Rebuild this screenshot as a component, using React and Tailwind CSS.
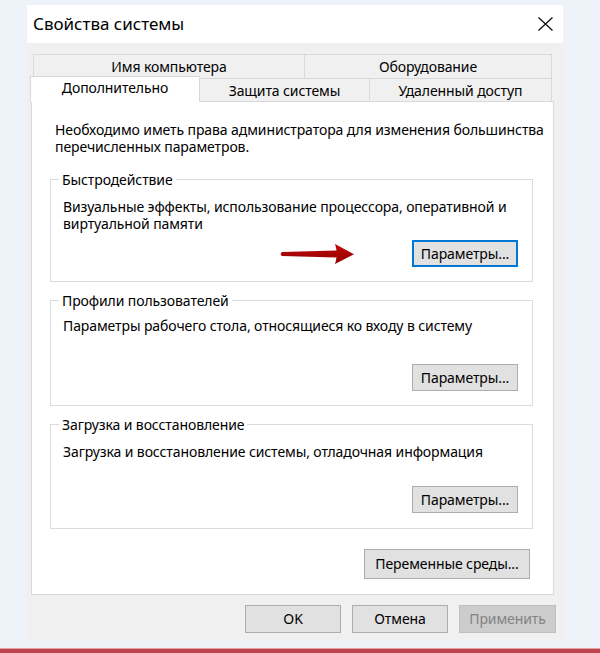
import React from "react"

function Btn({ children, focused, disabled, className = "" }) {
  const base = "flex items-center justify-center whitespace-nowrap leading-none"
  if (focused) {
    return (
      <div className={`${base} border-2 border-[#0078d7] bg-[#e1e1e1] text-black ${className}`}>
        {children}
      </div>
    )
  }
  if (disabled) {
    return (
      <div className={`${base} border border-[#bfbfbf] bg-[#cccccc] text-[#838383] ${className}`}>
        {children}
      </div>
    )
  }
  return (
    <div className={`${base} border border-[#adadad] bg-[#e1e1e1] text-black ${className}`}>
      {children}
    </div>
  )
}

function Group({ title, children, className = "" }) {
  return (
    <div className={`relative ml-[18px] w-[483px] border border-[#dcdcdc] ${className}`}>
      <span className="absolute -top-[9px] left-[8px] whitespace-nowrap bg-white px-[3px] leading-[17px]">{title}</span>
      {children}
    </div>
  )
}

function Arrow() {
  return (
    <svg width="76" height="22" viewBox="0 0 76 22" className="mr-[57px]">
      <defs>
        <linearGradient id="ar" x1="0" y1="0" x2="0" y2="1">
          <stop offset="0" stopColor="#c40a0a" />
          <stop offset="1" stopColor="#8e0000" />
        </linearGradient>
      </defs>
      <path
        d="M3 8.9 Q0.3 11 3 13.1 L57.5 14.6 Q57 18 56 21 L75 11.2 L56 1 Q57 4.2 57.5 7.6 Z"
        fill="url(#ar)"
      />
    </svg>
  )
}

export default function App() {
  return (
    <div className="flex h-[653px] w-[600px] flex-col bg-[#eef3fa] font-['Noto_Sans','DejaVu_Sans',sans-serif] text-[14px] tracking-[-0.1px] text-black">
      <div className="ml-[27px] mt-[5px] flex h-[635px] w-[536px] flex-col bg-[#f0f0f0]">
        {/* title bar */}
        <div className="flex h-[38px] items-center justify-between bg-white pl-[6px] pr-[10px]">
          <span className="text-[17px] tracking-normal">Свойства системы</span>
          <svg width="15" height="14" viewBox="0 0 15 14">
            <path d="M0.5 0.5 L14.5 13.5 M14.5 0.5 L0.5 13.5" stroke="#111" strokeWidth="1.3" fill="none" />
          </svg>
        </div>

        {/* tabs */}
        <div className="mt-[11px] ml-[6px] flex h-[24px]">
          <div className="flex w-[272px] items-center justify-center border-l border-r border-t border-[#d9d9d9] leading-none">
            Имя компьютера
          </div>
          <div className="flex w-[247px] items-center justify-center border-r border-t border-[#d9d9d9] leading-none">
            Оборудование
          </div>
        </div>
        <div className="relative z-10 -mt-[2px] ml-[3px] flex h-[26px] items-end">
          <div className="flex h-[26px] w-[170px] items-center justify-center border-l border-r border-t border-[#d9d9d9] bg-white pb-[3px] leading-none">
            Дополнительно
          </div>
          <div className="flex h-[24px] w-[170px] items-center justify-center border-r border-t border-[#d9d9d9] leading-none">
            Защита системы
          </div>
          <div className="flex h-[24px] w-[182px] items-center justify-center border-r border-t border-[#d9d9d9] leading-none">
            Удаленный доступ
          </div>
        </div>

        {/* panel */}
        <div className="-mt-px ml-[4px] flex h-[494px] w-[523px] flex-col border border-[#d9d9d9] bg-white leading-[17px]">
          <p className="whitespace-nowrap pl-[23px] pt-[19px]">
            Необходимо иметь права администратора для изменения большинства
            <br />
            перечисленных параметров.
          </p>

          <Group title="Быстродействие" className="mt-[24px] pb-[14px] pl-[12px] pr-[14px] pt-[18px]">
            <p className="whitespace-nowrap">
              Визуальные эффекты, использование процессора, оперативной и
              <br />
              виртуальной памяти
            </p>
            <div className="mt-[8px] flex items-center justify-end">
              <Arrow />
              <Btn focused className="h-[27px] w-[106px]">Параметры...</Btn>
            </div>
          </Group>

          <Group title="Профили пользователей" className="mt-[18px] pb-[14px] pl-[12px] pr-[14px] pt-[16px]">
            <p className="whitespace-nowrap">Параметры рабочего стола, относящиеся ко входу в систему</p>
            <div className="mt-[30px] flex justify-end">
              <Btn className="h-[27px] w-[106px]">Параметры...</Btn>
            </div>
          </Group>

          <Group title="Загрузка и восстановление" className="mt-[18px] pb-[15px] pl-[12px] pr-[14px] pt-[18px]">
            <p className="whitespace-nowrap">Загрузка и восстановление системы, отладочная информация</p>
            <div className="mt-[26px] flex justify-end">
              <Btn className="h-[27px] w-[106px]">Параметры...</Btn>
            </div>
          </Group>

          <div className="mr-[23px] mt-[20px] flex justify-end">
            <Btn className="h-[30px] w-[166px]">Переменные среды...</Btn>
          </div>
        </div>

        {/* footer buttons */}
        <div className="mt-[10px] flex justify-end gap-[11px] pr-[7px]">
          <Btn className="h-[28px] w-[96px]">OK</Btn>
          <Btn className="h-[28px] w-[96px]">Отмена</Btn>
          <Btn disabled className="h-[28px] w-[97px]">Применить</Btn>
        </div>
      </div>
      <div className="mt-[8px] h-[5px] border-t border-[#e8a0a4] bg-[#bd4650]" />
    </div>
  )
}
